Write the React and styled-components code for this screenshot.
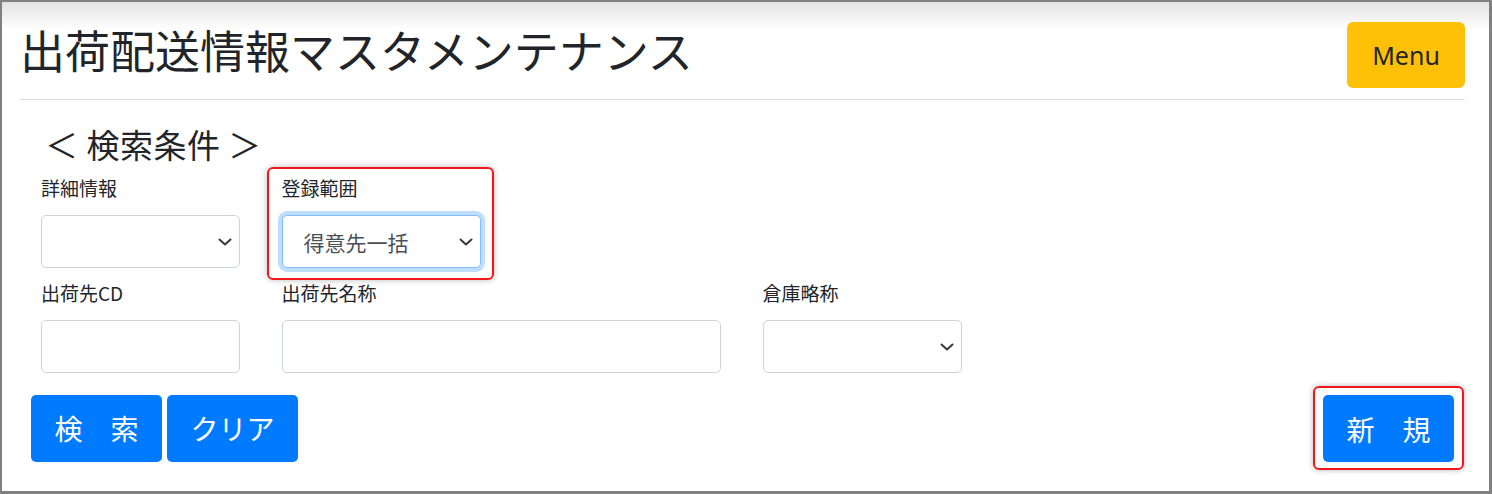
import React from "react";
import styled, { createGlobalStyle } from "styled-components";

const GlobalStyle = createGlobalStyle`
  html, body {
    margin: 0;
    padding: 0;
    background: #fff;
  }
  body {
    font-family: "Noto Sans", "Noto Sans CJK JP", sans-serif;
    color: #212529;
  }
`;

const Frame = styled.div`
  box-sizing: border-box;
  width: 1492px;
  height: 494px;
  border-style: solid;
  border-color: #808080;
  border-width: 2px 3px 3px 2px;
  background: linear-gradient(#e2e2e2, #ffffff 28px);
  padding: 20px 24px 0 18px;
  overflow: hidden;
`;

const Header = styled.div`
  display: flex;
  justify-content: space-between;
  align-items: flex-start;
  height: 66px;
`;

const Title = styled.h1`
  margin: 1px 0 0 0;
  font-family: "Noto Sans CJK JP", sans-serif;
  font-weight: 400;
  font-size: 45px;
  line-height: 54px;
  color: #212529;
`;

const MenuButton = styled.button`
  width: 118px;
  height: 66px;
  border: none;
  border-radius: 6px;
  background: #ffc107;
  color: #212529;
  font-family: "Noto Sans", sans-serif;
  font-size: 25px;
  cursor: pointer;
  padding: 0;
`;

const Rule = styled.hr`
  margin: 11px 0 0 0;
  border: none;
  border-top: 1px solid #e0e0e0;
`;

const Section = styled.div`
  padding: 0 0 0 21px;
`;

const SectionTitle = styled.div`
  margin-top: 25px;
  font-family: "Noto Sans CJK JP", sans-serif;
  font-size: 33px;
  line-height: 38px;
  height: 38px;
  margin-left: 4px;
  letter-spacing: 0.5px;
`;

const FieldGrid = styled.div`
  display: grid;
  grid-template-columns: repeat(4, 199px);
  column-gap: 41.5px;
  row-gap: 10px;
  margin-top: 10px;
`;

const Field = styled.div`
  position: relative;
  grid-column: span ${(p) => p.$span || 1};
  ${(p) =>
    p.$highlight &&
    `
    &::before {
      content: "";
      position: absolute;
      top: -6px;
      left: -15px;
      right: -13px;
      bottom: -12px;
      border: 2px solid #f01818;
      border-radius: 6px;
      box-shadow: 0 0 6px rgba(0, 0, 0, 0.28);
      pointer-events: none;
    }
  `}
`;

const Label = styled.label`
  display: block;
  font-family: "Noto Sans CJK JP", sans-serif;
  font-size: 19px;
  line-height: 30px;
  height: 30px;
  margin-bottom: 12px;
  color: #212529;
`;

const TextInput = styled.input`
  box-sizing: border-box;
  display: block;
  width: 100%;
  height: 53px;
  border: 1px solid #ced4da;
  border-radius: 5px;
  background: #fff;
  font-size: 22px;
  padding: 0 20px;
  outline: none;
`;

const SelectWrap = styled.div`
  position: relative;
  height: 53px;
`;

const Select = styled.select`
  box-sizing: border-box;
  width: 100%;
  height: 53px;
  appearance: none;
  -webkit-appearance: none;
  border: 1px solid ${(p) => (p.$focused ? "#80bdff" : "#ced4da")};
  box-shadow: ${(p) => (p.$focused ? "0 0 0 4px rgba(0, 123, 255, 0.25)" : "none")};
  border-radius: 5px;
  background: #fff;
  color: #495057;
  font-family: "Noto Sans CJK JP", sans-serif;
  font-size: 21px;
  padding: 0 40px 0 21px;
  outline: none;
`;

const Chevron = styled.svg`
  position: absolute;
  right: 8px;
  top: 50%;
  margin-top: -4px;
  width: 14px;
  height: 8px;
  pointer-events: none;
`;

const ButtonRow = styled.div`
  display: flex;
  justify-content: space-between;
  align-items: center;
  margin-top: 13px;
  margin-left: -10px;
  margin-right: 1px;
`;

const ButtonGroup = styled.div`
  display: flex;
  gap: 5px;
`;

const ActionButton = styled.button`
  width: 131px;
  height: 67px;
  border: none;
  border-radius: 5px;
  background: #007bff;
  color: #fff;
  font-family: "Noto Sans CJK JP", sans-serif;
  font-size: 28px;
  padding: 0;
  cursor: pointer;
  white-space: pre;
`;

const Highlight = styled.div`
  padding: 7px 8px 6px 8px;
  border: 2px solid #f01818;
  border-radius: 6px;
  box-shadow: 0 0 6px rgba(0, 0, 0, 0.28);
`;

function ChevronIcon() {
  return (
    <Chevron viewBox="0 0 14 8">
      <path d="M1.5 1.5 L7 6.5 L12.5 1.5" fill="none" stroke="#343a40" strokeWidth="2" strokeLinecap="round" strokeLinejoin="round" />
    </Chevron>
  );
}

function SelectField({ value, focused }) {
  return (
    <SelectWrap>
      <Select $focused={focused} defaultValue={value}>
        <option value={value || ""}>{value}</option>
      </Select>
      <ChevronIcon />
    </SelectWrap>
  );
}

export default function App() {
  return (
    <>
      <GlobalStyle />
      <Frame>
        <Header>
          <Title>出荷配送情報マスタメンテナンス</Title>
          <MenuButton>Menu</MenuButton>
        </Header>
        <Rule />
        <Section>
          <SectionTitle>＜ 検索条件 ＞</SectionTitle>
          <FieldGrid>
            <Field>
              <Label>詳細情報</Label>
              <SelectField value="" />
            </Field>
            <Field $highlight>
              <Label>登録範囲</Label>
              <SelectField value="得意先一括" focused />
            </Field>
            <div />
            <div />
            <Field>
              <Label>出荷先CD</Label>
              <TextInput />
            </Field>
            <Field $span={2}>
              <Label>出荷先名称</Label>
              <TextInput />
            </Field>
            <Field>
              <Label>倉庫略称</Label>
              <SelectField value="" />
            </Field>
          </FieldGrid>
          <ButtonRow>
            <ButtonGroup>
              <ActionButton>検　索</ActionButton>
              <ActionButton>クリア</ActionButton>
            </ButtonGroup>
            <Highlight>
              <ActionButton>新　規</ActionButton>
            </Highlight>
          </ButtonRow>
        </Section>
      </Frame>
    </>
  );
}
